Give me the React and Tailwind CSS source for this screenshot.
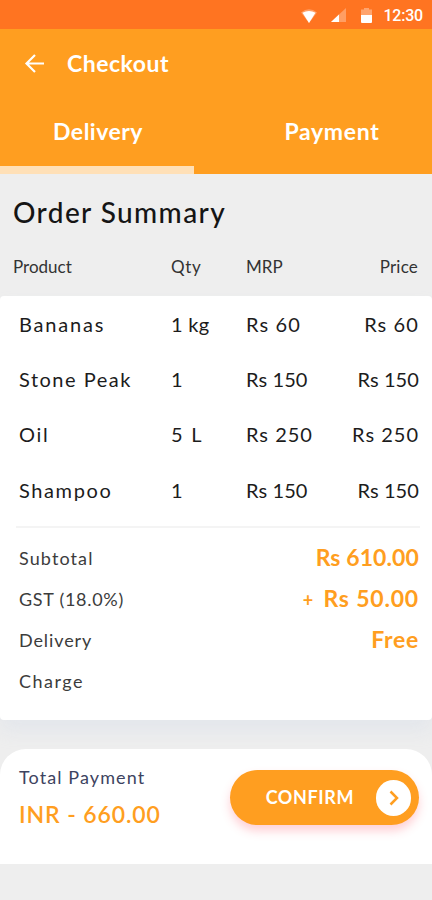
import React from 'react';

const items = [
  { name: 'Bananas', nameClass: 'tracking-[1.8px]', qty: '1 kg', qtyClass: 'tracking-[0.3px]', price: 'Rs 60', priceClass: 'tracking-[1.1px]' },
  { name: 'Stone Peak', nameClass: 'tracking-[1.5px]', qty: '1', price: 'Rs 150', priceClass: 'tracking-[0.1px]' },
  { name: 'Oil', nameClass: 'tracking-[1.7px]', qty: '5 L', qtyClass: 'tracking-[1.8px]', price: 'Rs 250', priceClass: 'tracking-[1px]' },
  { name: 'Shampoo', nameClass: 'tracking-[1.6px]', qty: '1', price: 'Rs 150', priceClass: 'tracking-[0.1px]' },
];

const StatusBar = () => (
  <div className="flex h-[29px] items-center justify-end bg-[#ff7421] pt-[2px] pr-[9px] text-white">
    <svg className="mr-[13px]" width="18" height="16" viewBox="0 0 18 16">
      <path d="M1 4.6Q9-2.2 17 4.6L9 15Z" fill="currentColor" opacity="0.3" />
      <path d="M2.5 4.800Q9 1 15.500 4.800L9 15Z" fill="currentColor" />
    </svg>
    <svg className="mr-[15px]" width="15" height="15" viewBox="0 0 15 15">
      <path d="M15 0V14H0Z" fill="currentColor" opacity="0.3" />
      <path d="M8 6.500V14H0Z" fill="currentColor" />
    </svg>
    <svg className="mr-[11px]" width="11" height="16" viewBox="0 0 11 16">
      <path d="M3 0H8V1.500H11V7H0V1.500H3Z" fill="currentColor" opacity="0.35" />
      <path d="M0 7H11V14Q11 15 10 15H1Q0 15 0 14Z" fill="currentColor" />
    </svg>
    <span className="font-[Roboto] text-[16px] leading-none font-medium tracking-[-0.2px]">12:30</span>
  </div>
);

const Header = () => (
  <header className="h-[145px] bg-[#ff9e20] text-white">
    <div className="flex h-[69px] items-center pl-[24px]">
      <svg width="21" height="20" viewBox="0 0 21 20" fill="none" stroke="currentColor" strokeWidth="2.2">
        <path d="M20 9.500H2.500M11 1L2.500 9.500L11 18" />
      </svg>
      <h1 className="ml-[22px] text-[23px] leading-none font-bold tracking-[0.5px]">Checkout</h1>
    </div>
    <nav className="flex h-[76px]">
      <button className="w-[194px] border-b-8 border-[#ffe0b7] pb-[1px] pl-[2px] text-[23px] font-bold tracking-[0.5px]">Delivery</button>
      <button className="flex-1 pb-[9px] pl-[38px] text-[23px] font-bold tracking-[0.7px]">Payment</button>
    </nav>
  </header>
);

const SummaryLine = ({ label, value, labelClass, valueClass }) => (
  <div className="flex h-[41px] items-center justify-between">
    <span className={`text-[18px] text-[#3c3c3c] ${labelClass}`}>{label}</span>
    <span className={`pb-[2px] text-[23px] font-bold text-[#ff9e20] ${valueClass}`}>{value}</span>
  </div>
);

export default function App() {
  return (
    <div className="h-[900px] w-[432px] overflow-hidden bg-[#eeeeee] font-[Lato,sans-serif] text-[#1c1c1c]">
      <StatusBar />
      <Header />

      <section className="h-[122px] pt-[19px]">
        <h2 className="pl-[13px] text-[28px] leading-[38px] font-medium tracking-[1.4px] text-[#151515]">Order Summary</h2>
        <div className="mt-[24px] grid grid-cols-[158px_75px_1fr] pr-[14px] pl-[13px] text-[17px] leading-6 text-[#333]">
          <span>Product</span>
          <span className="tracking-[0.7px]">Qty</span>
          <span className="flex justify-between">
            <span>MRP</span>
            <span className="tracking-[0.2px]">Price</span>
          </span>
        </div>
      </section>

      <main className="h-[424px] rounded bg-white shadow-[0_12px_18px_rgba(190,205,230,0.2)]">
        {items.map((item) => (
          <div key={item.name} className="grid h-[55.3px] grid-cols-[152px_75px_1fr] items-center pr-[13px] pl-[19px] text-[20px]">
            <span className={item.nameClass}>{item.name}</span>
            <span className={item.qtyClass}>{item.qty}</span>
            <span className={`flex justify-between ${item.priceClass}`}>
              <span>{item.price}</span>
              <span>{item.price}</span>
            </span>
          </div>
        ))}
        <div className="mt-[9px] mr-[12px] ml-[16px] h-[2px] bg-[#f4f4f4]" />
        <div className="mt-[10px] pr-[13px] pl-[19px]">
          <SummaryLine label="Subtotal" labelClass="tracking-[1.1px]" value="Rs 610.00" valueClass="tracking-[0.1px]" />
          <SummaryLine
            label="GST (18.0%)"
            labelClass="tracking-[0.7px]"
            value={<><span className="mr-[3px] text-[18px]">+</span> Rs 50.00</>}
            valueClass="tracking-[0.8px]"
          />
          <SummaryLine label="Delivery" labelClass="tracking-[0.9px]" value="Free" valueClass="tracking-[0.7px]" />
          <SummaryLine label="Charge" labelClass="tracking-[1.5px]" />
        </div>
      </main>

      <footer className="mt-[29px] flex h-[115px] justify-between rounded-t-[26px] bg-white pt-[14px] pr-[13px] pl-[19px]">
        <div>
          <div className="text-[18px] leading-[28px] tracking-[1.1px] text-[#3d4360]">Total Payment</div>
          <div className="mt-[5px] text-[23px] leading-[36px] font-semibold tracking-[0.9px] text-[#ff9e20]">INR - 660.00</div>
        </div>
        <button className="mt-[7px] flex h-[55px] w-[189px] items-center justify-end rounded-full bg-[#ff9e20] pr-[8px] shadow-[0_6px_10px_rgba(255,70,90,0.25)]">
          <span className="mr-[22px] text-[18px] font-bold tracking-[0.6px] text-white">CONFIRM</span>
          <span className="flex h-[36px] w-[35px] items-center justify-center rounded-full bg-white">
            <svg width="10" height="16" viewBox="0 0 10 16" fill="none" stroke="#ff9e20" strokeWidth="2.5">
              <path d="M1.500 1.500L8 8L1.500 14.500" />
            </svg>
          </span>
        </button>
      </footer>
    </div>
  );
}
